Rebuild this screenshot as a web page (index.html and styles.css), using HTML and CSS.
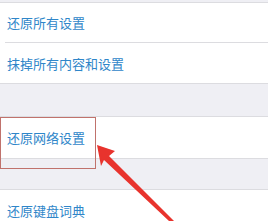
FILE: index.html
```html
<!DOCTYPE html>
<html lang="zh">
<head>
<meta charset="utf-8">
<link rel="stylesheet" href="styles.css">
</head>
<body>
<div class="page">
  <div class="gap gap-top"></div>
  <div class="group">
    <div class="row"><span>还原所有设置</span></div>
    <div class="row"><span>抹掉所有内容和设置</span></div>
  </div>
  <div class="gap gap-mid"></div>
  <div class="group">
    <div class="row row-tall"><span>还原网络设置</span></div>
  </div>
  <div class="gap gap-low"></div>
  <div class="group">
    <div class="row"><span>还原键盘词典</span></div>
  </div>
  <div class="highlight"></div>
  <svg class="arrow" width="268" height="221" viewBox="0 0 268 221">
    <polygon points="97,145 115,151 109,156 174,221 169,221 104,160 101,166" fill="#e8332d"/>
  </svg>
</div>
</body>
</html>
```
FILE: styles.css
```css
html, body {
  margin: 0;
  padding: 0;
  background: #efeff4;
}
.page {
  position: relative;
  width: 268px;
  height: 221px;
  overflow: hidden;
  font-family: "Noto Sans CJK SC", "Noto Sans", sans-serif;
}
.gap-top { height: 2px; }
.gap-mid { height: 32px; }
.gap-low { height: 30px; }
.group {
  background: #fff;
  border-top: 1px solid #dcdce0;
  border-bottom: 1px solid #dcdce0;
}
.row {
  height: 39px;
  margin-left: 5px;
  padding-left: 2px;
  display: flex;
  align-items: center;
  font-size: 13px;
  color: #2f86c9;
  border-bottom: 1px solid #dcdce0;
}
.row:last-child {
  border-bottom: none;
  height: 40px;
}
.row-tall, .row.row-tall:last-child { height: 41px; }
.highlight {
  position: absolute;
  left: 0;
  top: 117px;
  width: 94px;
  height: 50px;
  border: 1px solid #c0726c;
}
.arrow {
  position: absolute;
  left: 0;
  top: 0;
}
```
